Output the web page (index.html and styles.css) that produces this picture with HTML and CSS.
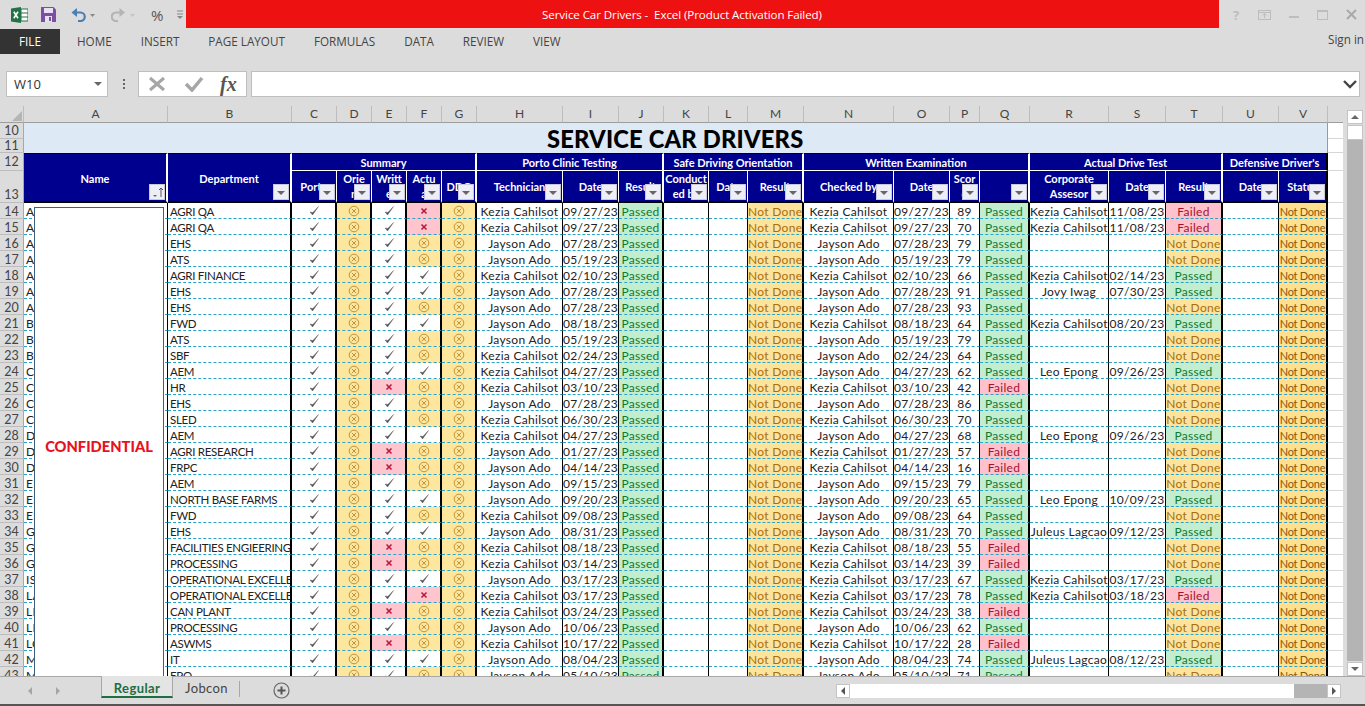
FILE: index.html
```html
<!DOCTYPE html>
<html lang="en">
<head>
<meta charset="UTF-8" />
<title>Service Car Drivers - Excel (Product Activation Failed)</title>
<link rel="stylesheet" href="styles.css">
</head>
<body>

<svg class="defs" width="0" height="0">
  <symbol id="ok" viewBox="0 0 12 12"><path d="M2 7 L4.600 10 L10.500 1.500 L4.800 7.600 Z" fill="#555" stroke="#555" stroke-width=".4"/></symbol>
  <symbol id="no" viewBox="0 0 12 12"><circle cx="6" cy="6" r="4.800" fill="none" stroke="#c5923a" stroke-width="1"/><path d="M3.800 3.800 L8.200 8.200 M8.200 3.800 L3.800 8.200" stroke="#c5923a" stroke-width="1"/></symbol>
  <symbol id="bad" viewBox="0 0 12 12"><path d="M3.500 3.500 L8.500 8.500 M8.500 3.500 L3.500 8.500" stroke="#b3173a" stroke-width="1.500"/></symbol>
</svg>

<div class="titlebar">
  <div class="qat">
    <svg class="ic-xl" width="17" height="16" viewBox="0 0 17 16"><rect x="6" y="2" width="11" height="12" fill="#fff" stroke="#217346"/><path d="M10 2v12M6 6h11M6 10h11" stroke="#217346"/><path d="M0 1.500 L10 0 V16 L0 14.500 Z" fill="#217346"/><path d="M2.800 4.800 L7 11.200 M7 4.800 L2.800 11.200" stroke="#fff" stroke-width="1.600"/></svg>
    <svg class="ic-save" width="15" height="15" viewBox="0 0 15 15"><path d="M0 0H12.500L15 2.500V15H0Z" fill="#7b4fa3"/><rect x="3" y="1" width="9" height="5" fill="#e9e0f2"/><rect x="4" y="9" width="7" height="6" fill="#e9e0f2"/><rect x="8" y="10" width="2" height="4" fill="#7b4fa3"/></svg>
    <svg class="ic-undo" width="24" height="15" viewBox="0 0 24 15"><path d="M4 5.500 H9.500 A4.200 4.200 0 0 1 9.500 14 H7" fill="none" stroke="#4a7fb5" stroke-width="2.200"/><path d="M0.500 5.500 L6 1 V10 Z" fill="#4a7fb5"/><path d="M19 7 H24 L21.500 10 Z" fill="#888"/></svg>
    <svg class="ic-redo" width="24" height="15" viewBox="0 0 24 15"><path d="M10 5.500 H5 A4.200 4.200 0 0 0 5 14 H7" fill="none" stroke="#b4b4b4" stroke-width="2.200"/><path d="M14 5.500 L8.500 1 V10 Z" fill="#b4b4b4"/><path d="M19 7 H24 L21.500 10 Z" fill="#c4c4c4"/></svg>
    <span class="qat-pct">%</span>
    <svg class="ic-more" width="6" height="9" viewBox="0 0 6 9"><path d="M0 1H6M0 4H6" stroke="#888"/><path d="M0 6H6L3 9Z" fill="#888"/></svg>
  </div>
  <div class="title">Service Car Drivers -&nbsp; Excel (Product Activation Failed)</div>
  <div class="winbtns">
    <span class="wb-help">?</span>
    <svg width="13" height="10" viewBox="0 0 13 10"><rect x=".5" y=".5" width="12" height="9" fill="none" stroke="#bdbdbd"/><path d="M.5 2.500H12.500" stroke="#bdbdbd"/><path d="M6.500 8V4M4.500 5.500L6.500 3.500L8.500 5.500" fill="none" stroke="#bdbdbd"/></svg>
    <svg width="10" height="10" viewBox="0 0 10 10"><path d="M0 7H10" stroke="#bdbdbd" stroke-width="2"/></svg>
    <svg width="11" height="10" viewBox="0 0 11 10"><rect x=".5" y=".5" width="10" height="9" fill="none" stroke="#bdbdbd"/><path d="M.5 1.500H10.500" stroke="#bdbdbd"/></svg>
    <svg width="11" height="11" viewBox="0 0 11 11"><path d="M1 1L10 10M10 1L1 10" stroke="#a9a9a9" stroke-width="2"/></svg>
  </div>
</div>

<div class="ribbon">
  <span class="tab-file">FILE</span>
  <nav class="ribbon-tabs">
    <span>HOME</span><span>INSERT</span><span>PAGE LAYOUT</span><span>FORMULAS</span><span>DATA</span><span>REVIEW</span><span>VIEW</span>
  </nav>
  <span class="signin">Sign in</span>
</div>

<div class="formula-row">
  <div class="namebox"><span>W10</span><i class="tri"></i></div>
  <div class="dots"></div>
  <div class="fx-box">
    <svg width="18" height="16" viewBox="0 0 18 16"><path d="M2 2L16 14M16 2L2 14" stroke="#a6a6a6" stroke-width="3"/></svg>
    <svg width="20" height="16" viewBox="0 0 20 16"><path d="M2 8L8 14L18 2" fill="none" stroke="#a6a6a6" stroke-width="3.500"/></svg>
    <span class="fx">fx</span>
  </div>
  <div class="formula-input">
    <svg width="14" height="9" viewBox="0 0 14 9"><path d="M1 1L7 7L13 1" fill="none" stroke="#444" stroke-width="2.400"/></svg>
  </div>
</div>

<div class="sheet">
  <div class="viewport">
    <table class="grid">
      <colgroup>
        <col class="c-rh"><col class="c-a"><col class="c-b"><col class="c-c"><col class="c-d"><col class="c-d"><col class="c-d"><col class="c-d">
        <col class="c-h"><col class="c-i"><col class="c-j"><col class="c-k"><col class="c-l"><col class="c-i"><col class="c-n"><col class="c-i">
        <col class="c-p"><col class="c-q"><col class="c-r"><col class="c-s"><col class="c-s"><col class="c-i"><col class="c-v"><col class="c-w">
      </colgroup>
      <thead>
        <tr class="heads">
          <th class="corner"><i></i></th>
          <th>A</th><th>B</th><th>C</th><th>D</th><th>E</th><th>F</th><th>G</th><th>H</th><th>I</th><th>J</th><th>K</th><th>L</th><th>M</th><th>N</th><th>O</th><th>P</th><th>Q</th><th>R</th><th>S</th><th>T</th><th>U</th><th>V</th><th class="blank"></th>
        </tr>
      </thead>
      <tbody>
        <tr class="r10">
          <td class="rh">10</td>
          <td class="banner" colspan="7" rowspan="2"></td>
          <td class="banner banner-title" colspan="15" rowspan="2">SERVICE CAR DRIVERS</td>
          <td class="wc"></td>
        </tr>
        <tr class="r11"><td class="rh">11</td><td class="wc"></td></tr>
        <tr class="r12">
          <td class="rh">12</td>
          <th class="hd sep2 hd-top" rowspan="2">Name<span class="fb fb-sort"><svg width="13" height="11" viewBox="0 0 13 11"><path d="M2 8H6L4 10Z" fill="#666"/><path d="M10 10V1M8 3L10 1L12 3" fill="none" stroke="#555"/></svg></span></th>
          <th class="hd sep2 hd-top" rowspan="2">Department<span class="fb"></span></th>
          <th class="hd sep2 grp" colspan="5">Summary</th>
          <th class="hd sep2 grp" colspan="3">Porto Clinic Testing</th>
          <th class="hd sep2 grp" colspan="3">Safe Driving Orientation</th>
          <th class="hd sep2 grp" colspan="4">Written Examination</th>
          <th class="hd sep2 grp" colspan="3">Actual Drive Test</th>
          <th class="hd endh grp" colspan="2">Defensive Driver's</th>
          <td class="wc"></td>
        </tr>
        <tr class="r13">
          <td class="rh rh-low">13</td>
          <th class="hd sub sep1">Porto<span class="fb"></span></th>
          <th class="hd sub sep1 wrap">Orie<br>n<span class="fb"></span></th>
          <th class="hd sub sep1 wrap">Writt<br>e<span class="fb"></span></th>
          <th class="hd sub sep1 wrap">Actu<br>a<span class="fb"></span></th>
          <th class="hd sub sep2">DDC<span class="fb"></span></th>
          <th class="hd sub sep1">Technician<span class="fb"></span></th>
          <th class="hd sub sep1">Date<span class="fb"></span></th>
          <th class="hd sub sep2">Result<span class="fb"></span></th>
          <th class="hd sub sep1 wrap">Conduct<br>ed by<span class="fb"></span></th>
          <th class="hd sub sep1">Date<span class="fb"></span></th>
          <th class="hd sub sep2">Result<span class="fb"></span></th>
          <th class="hd sub sep1">Checked by<span class="fb"></span></th>
          <th class="hd sub sep1">Date<span class="fb"></span></th>
          <th class="hd sub sep1 wrap">Scor<br>e<span class="fb"></span></th>
          <th class="hd sub sep2"><span class="fb"></span></th>
          <th class="hd sub sep1 wrap">Corporate<br>Assesor<span class="fb"></span></th>
          <th class="hd sub sep1">Date<span class="fb"></span></th>
          <th class="hd sub sep2">Result<span class="fb"></span></th>
          <th class="hd sub sep1">Date<span class="fb"></span></th>
          <th class="hd sub endh">Status<span class="fb"></span></th>
          <td class="wc"></td>
        </tr>
      </tbody>
      <tbody id="rows"></tbody>
    </table>
    <div class="confidential">CONFIDENTIAL</div>
  </div>
  <div class="vscroll">
    <div class="sb-btn"><i class="tri tri-up"></i></div>
    <div class="sb-thumb"></div>
    <div class="sb-track"></div>
    <div class="sb-btn"><i class="tri"></i></div>
  </div>
</div>

<div class="tabstrip">
  <div class="tab-nav">
    <i class="nav-l"></i><i class="nav-r"></i>
  </div>
  <div class="tab-active">Regular</div>
  <div class="tab-other">Jobcon</div>
  <svg class="tab-add" width="17" height="17" viewBox="0 0 17 17"><circle cx="8.500" cy="8.500" r="7.500" fill="none" stroke="#666" stroke-width="1.200"/><path d="M8.500 4.500V12.500M4.500 8.500H12.500" stroke="#555" stroke-width="2"/></svg>
  <div class="hscroll">
    <div class="sb-btn"><i class="nav-l dark"></i></div>
    <div class="hs-thumb"></div>
    <div class="hs-track"></div>
    <div class="sb-btn"><i class="nav-r dark"></i></div>
  </div>
</div>

<script src="sheet.js"></script>
</body>
</html>
```

FILE: styles.css
```css
body {
  margin: 0;
  width: 1365px;
  height: 706px;
  overflow: hidden;
  background: #dcdcdc;
  font-family: "Lato", "Liberation Sans", sans-serif;
  color: #333;
}
.defs { position: absolute; }

/* title bar */
.titlebar {
  display: flex;
  height: 29px;
}
.qat {
  width: 186px;
  flex: none;
  display: flex;
  align-items: center;
  padding-left: 11px;
  box-sizing: border-box;
}
.ic-save { margin-left: 13px; }
.ic-undo { margin-left: 15px; }
.ic-redo { margin-left: 16px; }
.qat-pct {
  margin-left: 16px;
  font: 15px "Open Sans", sans-serif;
  color: #555;
}
.ic-more { margin-left: 14px; }
.title {
  flex: 1;
  height: 28px;
  padding-right: 41px;
  background: #ee1111;
  color: #fff;
  font: 11.600px/30px "Open Sans", sans-serif;
  text-align: center;
  letter-spacing: -.1px;
}
.winbtns {
  width: 146px;
  display: flex;
  align-items: center;
  gap: 18px;
  padding-left: 14px;
  box-sizing: border-box;
}
.wb-help { font: bold 13px "Open Sans", sans-serif; color: #bdbdbd; margin-right: 1px; }

/* ribbon tabs */
.ribbon {
  display: flex;
  height: 25px;
  font: 11.700px/25px "Open Sans", sans-serif;
  color: #444;
}
.tab-file {
  width: 60px;
  background: #333;
  color: #fff;
  text-align: center;
}
.ribbon-tabs {
  display: flex;
  gap: 29px;
  padding-left: 17px;
}
.signin {
  margin-left: auto;
  margin-top: -2px;
  margin-right: 1px;
}

/* formula bar */
.formula-row {
  display: flex;
  height: 26px;
  margin-top: 17px;
  padding-left: 6px;
}
.namebox {
  width: 102px;
  box-sizing: border-box;
  background: #fff;
  border: 1px solid #bfbfbf;
  display: flex;
  align-items: center;
  justify-content: space-between;
  padding: 0 5px 0 7px;
  font: 13px "Open Sans", sans-serif;
}
.tri {
  display: block;
  width: 0;
  height: 0;
  border-left: 4px solid transparent;
  border-right: 4px solid transparent;
  border-top: 4px solid #666;
}
.tri-up {
  border-top: 0;
  border-bottom: 4px solid #666;
}
.dots {
  width: 30px;
  position: relative;
}
.dots::before {
  content: "";
  position: absolute;
  left: 15px;
  top: 8px;
  width: 2px;
  height: 2px;
  background: #666;
  box-shadow: 0 4px 0 #666, 0 8px 0 #666;
}
.fx-box {
  width: 109px;
  box-sizing: border-box;
  background: #fff;
  border: 1px solid #bfbfbf;
  display: flex;
  align-items: center;
  gap: 18px;
  padding-left: 9px;
}
.fx {
  font: italic bold 20px "Liberation Serif", serif;
  color: #555;
  margin-left: -2px;
}
.formula-input {
  width: 1109px;
  box-sizing: border-box;
  margin-left: 4px;
  background: #fff;
  border: 1px solid #bfbfbf;
  display: flex;
  align-items: center;
  justify-content: flex-end;
  padding-right: 2px;
}

/* sheet */
.sheet {
  display: flex;
  height: 571px;
  margin-top: 9px;
  border-bottom: 1px solid #a8a8a8;
  box-sizing: border-box;
}
.viewport {
  width: 1343px;
  height: 570px;
  overflow: hidden;
  position: relative;
  background: #fff;
}
.grid {
  width: 1343px;
  table-layout: fixed;
  border-collapse: separate;
  border-spacing: 0;
  font-size: 12px;
  letter-spacing: .3px;
  color: #222;
}
.c-rh { width: 24px; } .c-a { width: 144px; } .c-b { width: 124px; } .c-c { width: 45px; }
.c-d { width: 35px; } .c-h { width: 86px; } .c-i { width: 56px; } .c-j { width: 45px; }
.c-k { width: 45px; } .c-l { width: 39px; } .c-n { width: 90px; } .c-p { width: 30px; }
.c-q { width: 50px; } .c-r { width: 79px; } .c-s { width: 57px; } .c-v { width: 49px; }
.c-w { width: 15px; }

.grid td, .grid th {
  padding: 0;
  box-sizing: border-box;
  overflow: hidden;
  white-space: nowrap;
}
.heads th {
  height: 17px;
  background: #dcdcdc;
  border-right: 1px solid #bdbdbd;
  border-bottom: 1px solid #9d9d9d;
  font-weight: normal;
  font-size: 12px;
  line-height: 14px;
  letter-spacing: 0;
  color: #444;
}
.heads .blank { border-right: 0; }
.corner { position: relative; }
.corner i {
  position: absolute;
  right: 1px;
  bottom: 1px;
  width: 0;
  height: 0;
  border-left: 10px solid transparent;
  border-bottom: 10px solid #b5b5b5;
}
.grid .rh {
  padding-top: 1px;
  background: #dcdcdc;
  border-right: 1px solid #a8a8a8;
  border-bottom: 1px solid #bdbdbd;
  text-align: center;
  font-size: 12.500px;
  line-height: 12px;
  letter-spacing: 0;
  color: #444;
}
.grid .rh-low { vertical-align: bottom; padding-bottom: 1px; }
.r10 { height: 16px; }
.r11 { height: 14px; }
.r12 { height: 18px; }
.r13 { height: 32px; }

.banner {
  background: #dde9f5;
}
.banner:first-of-type { border-right: 1px solid #555; }
.grid .banner-title {
  padding: 2px 0 0 70px;
  font-size: 23.700px;
  line-height: 24px;
  font-weight: 900;
  letter-spacing: .2px;
  color: #000;
  border-right: 1px solid #999;
}
.grid td.wc {
  border-bottom: 1px solid #d6d6d6;
}

.hd {
  background: #00008e;
  color: #fff;
  font-size: 11px;
  line-height: 15px;
  font-weight: bold;
  letter-spacing: 0;
  text-align: center;
  position: relative;
}
.grid .hd-top { padding-top: 1px; border-top: 1px solid #000; border-bottom: 2px solid #000; }
.grp { border-top: 1px solid #000; border-bottom: 1px solid #fff; }
.sub { border-bottom: 2px solid #000; }
.sep1 { border-right: 1px solid #fff; }
.sep2 { border-right: 2px solid #fff; }
.endh { border-right: 2px solid #000; }
.fb {
  position: absolute;
  right: 1px;
  bottom: 1px;
  width: 16px;
  height: 16px;
  background: #eeeef6;
  border: 1px solid #c8c8d8;
  box-sizing: border-box;
}
.fb::after {
  content: "";
  position: absolute;
  left: 3px;
  top: 6px;
  border-left: 4px solid transparent;
  border-right: 4px solid transparent;
  border-top: 4px solid #666;
}
.fb-sort::after { display: none; }
.fb-sort svg { display: block; margin: 2px 0 0 1px; }

/* data rows */
.row { height: 16px; }
.row td {
  padding-top: 2px;
  line-height: 13px;
  border-bottom: 1px dashed #2aa3c6;
  text-align: center;
  background: #fff;
}
.row td.rh {
  padding-top: 2px;
  line-height: 13px;
  border-bottom: 1px solid #bdbdbd;
  background: #dcdcdc;
}
.row td.wc { border-bottom: 1px solid #d6d6d6; }
.row .left { text-align: left; padding-left: 2px; }
.row .dept {
  font-size: 11.500px;
  letter-spacing: -.3px;
}
.e1 { border-right: 1px solid #000; }
.e2 { border-right: 2px solid #000; }
.row td.yes { background: #fff; padding-top: 0; }
.row td.warn { background: #fde79e; padding-top: 0; }
.row td.fail { background: #ffc5ce; padding-top: 0; }
.row td svg { display: block; width: 12px; height: 12px; margin: 1px auto 0; }
.row td.yes svg { margin-top: 0; }

.row td.p { background: #c3edcf; color: #0e7a30; }
.row td.f { background: #ffc2cc; color: #a51230; }
.row td.n { background: #fde49a; color: #a86e12; }
.row td.small {
  font-size: 11px;
  letter-spacing: -.25px;
  background: #ffe08f;
  color: #85570f;
}

.confidential {
  position: absolute;
  left: 34px;
  top: 101px;
  width: 130px;
  height: 478px;
  box-sizing: border-box;
  background: #fff;
  border: 1px solid #3f5f7f;
  display: flex;
  align-items: center;
  justify-content: center;
  color: #e81123;
  font-size: 14.700px;
  font-weight: 900;
}

/* vertical scrollbar */
.vscroll {
  width: 22px;
  display: flex;
  flex-direction: column;
  padding: 4px 2px 0 4px;
  box-sizing: border-box;
  gap: 1px;
}
.sb-btn {
  width: 16px;
  height: 14px;
  box-sizing: border-box;
  background: #fff;
  border: 1px solid #c4c4c4;
  display: flex;
  align-items: center;
  justify-content: center;
  flex: none;
}
.sb-thumb {
  width: 16px;
  height: 15px;
  box-sizing: border-box;
  background: #fff;
  border: 1px solid #c4c4c4;
  flex: none;
}
.sb-track {
  flex: 1;
  width: 16px;
  background: #b4b4b4;
  margin-top: -1px;
}

/* sheet tabs */
.tabstrip {
  display: flex;
  height: 29px;
  box-sizing: border-box;
  border-bottom: 2px solid #555;
  position: relative;
  font-size: 13px;
  letter-spacing: .4px;
}
.tab-nav {
  width: 101px;
  display: flex;
  gap: 24px;
  padding: 10px 0 0 28px;
  box-sizing: border-box;
}
.nav-l, .nav-r {
  display: block;
  width: 0;
  height: 0;
  border-top: 4px solid transparent;
  border-bottom: 4px solid transparent;
}
.nav-l { border-right: 4px solid #a6a6a6; }
.nav-r { border-left: 4px solid #a6a6a6; }
.nav-l.dark { border-right-color: #555; }
.nav-r.dark { border-left-color: #555; }
.tab-active {
  width: 72px;
  height: 22px;
  box-sizing: border-box;
  margin-top: -1px;
  background: #e4e4e4;
  border-left: 1px solid #a8a8a8;
  border-right: 1px solid #a8a8a8;
  border-bottom: 2px solid #1e6e42;
  color: #1e6e42;
  font-weight: bold;
  text-align: center;
  line-height: 25px;
}
.tab-other {
  width: 67px;
  height: 16px;
  margin-top: 4px;
  box-sizing: border-box;
  border-right: 1px solid #a8a8a8;
  padding-left: 12px;
  line-height: 15px;
  color: #444;
}
.tab-add {
  margin: 5px 0 0 33px;
}
.hscroll {
  position: absolute;
  left: 836px;
  top: 7px;
  display: flex;
  height: 14px;
  width: 505px;
}
.hs-thumb { flex: 1; background: #fff; }
.hs-track { width: 33px; background: #b4b4b4; }
.hscroll .sb-btn { width: 14px; }
```

FILE: sheet.js
```js
// rows 14-43: name, dept, E, F, tech, date, checker, date, score, written, assessor, date, drive
const K = 'Kezia Cahilsot', J = 'Jayson Ado', L = 'Leo Epong', G = 'Juleus Lagcao', W = 'Jovy Iwag';
const data = [
  ['AB', 'AGRI QA', 'v', 'x', K, '09/27/23', K, '09/27/23', 89, 'p', K, '11/08/23', 'f'],
  ['AB', 'AGRI QA', 'v', 'x', K, '09/27/23', K, '09/27/23', 70, 'p', K, '11/08/23', 'f'],
  ['AC', 'EHS', 'v', 'o', J, '07/28/23', J, '07/28/23', 79, 'p'],
  ['AG', 'ATS', 'v', 'o', J, '05/19/23', J, '05/19/23', 79, 'p'],
  ['AL', 'AGRI FINANCE', 'v', 'v', K, '02/10/23', K, '02/10/23', 66, 'p', K, '02/14/23', 'p'],
  ['AL', 'EHS', 'v', 'v', J, '07/28/23', J, '07/28/23', 91, 'p', W, '07/30/23', 'p'],
  ['AN', 'EHS', 'v', 'o', J, '07/28/23', J, '07/28/23', 93, 'p'],
  ['BA', 'FWD', 'v', 'v', J, '08/18/23', K, '08/18/23', 64, 'p', K, '08/20/23', 'p'],
  ['BA', 'ATS', 'v', 'o', J, '05/19/23', J, '05/19/23', 79, 'p'],
  ['BA', 'SBF', 'v', 'o', K, '02/24/23', J, '02/24/23', 64, 'p'],
  ['CA', 'AEM', 'v', 'v', K, '04/27/23', J, '04/27/23', 62, 'p', L, '09/26/23', 'p'],
  ['CA', 'HR', 'x', 'o', K, '03/10/23', K, '03/10/23', 42, 'f'],
  ['CA', 'EHS', 'v', 'o', J, '07/28/23', J, '07/28/23', 86, 'p'],
  ['CA', 'SLED', 'v', 'o', K, '06/30/23', K, '06/30/23', 70, 'p'],
  ['DA', 'AEM', 'v', 'v', K, '04/27/23', J, '04/27/23', 68, 'p', L, '09/26/23', 'p'],
  ['DE', 'AGRI RESEARCH', 'x', 'o', J, '01/27/23', K, '01/27/23', 57, 'f'],
  ['DI', 'FRPC', 'x', 'o', J, '04/14/23', K, '04/14/23', 16, 'f'],
  ['EL', 'AEM', 'v', 'o', J, '09/15/23', J, '09/15/23', 79, 'p'],
  ['ES', 'NORTH BASE FARMS', 'v', 'v', J, '09/20/23', J, '09/20/23', 65, 'p', L, '10/09/23', 'p'],
  ['ES', 'FWD', 'v', 'o', K, '09/08/23', J, '09/08/23', 64, 'p'],
  ['GA', 'EHS', 'v', 'v', J, '08/31/23', J, '08/31/23', 70, 'p', G, '09/12/23', 'p'],
  ['GE', 'FACILITIES ENGIEERING', 'x', 'o', K, '08/18/23', K, '08/18/23', 55, 'f'],
  ['GO', 'PROCESSING', 'x', 'o', K, '03/14/23', K, '03/14/23', 39, 'f'],
  ['IS', 'OPERATIONAL EXCELLENCE', 'v', 'v', J, '03/17/23', K, '03/17/23', 67, 'p', K, '03/17/23', 'p'],
  ['LA', 'OPERATIONAL EXCELLENCE', 'v', 'x', K, '03/17/23', K, '03/17/23', 78, 'p', K, '03/18/23', 'f'],
  ['LI', 'CAN PLANT', 'x', 'o', K, '03/24/23', K, '03/24/23', 38, 'f'],
  ['LI', 'PROCESSING', 'v', 'o', J, '10/06/23', J, '10/06/23', 62, 'p'],
  ['LO', 'ASWMS', 'x', 'o', K, '10/17/22', K, '10/17/22', 28, 'f'],
  ['MA', 'IT', 'v', 'v', J, '08/04/23', J, '08/04/23', 74, 'p', G, '08/12/23', 'p'],
  ['MA', 'EPO', 'v', 'o', J, '05/10/23', J, '05/10/23', 71, 'p']
];

const words = { p: 'Passed', f: 'Failed', n: 'Not Done' };

function mark(kind, edge) {
  const map = { v: ['yes', 'ok'], o: ['warn', 'no'], x: ['fail', 'bad'] };
  const [cls, icon] = map[kind];
  return `<td class="${cls} ${edge}"><svg><use href="#${icon}"/></svg></td>`;
}

function result(kind, edge) {
  return `<td class="${kind} ${edge}">${words[kind]}</td>`;
}

document.getElementById('rows').innerHTML = data.map((r, i) => {
  const [name, dept, e, f, tech, d1, chk, d2, score, written, who, d3, drive] = r;
  return `<tr class="row">
    <td class="rh">${i + 14}</td>
    <td class="left e1">${name}</td>
    <td class="left dept e2">${dept}</td>
    ${mark('v', 'e2')}${mark('o', 'e2')}${mark(e, 'e2')}${mark(f, 'e2')}${mark('o', 'e2')}
    <td class="e1">${tech}</td><td class="e1">${d1}</td>${result('p', 'e2')}
    <td class="e1"></td><td class="e1"></td>${result('n', 'e2')}
    <td class="e1">${chk}</td><td class="e1">${d2}</td><td class="e1">${score}</td>${result(written, 'e2')}
    <td class="e1">${who || ''}</td><td class="e1">${d3 || ''}</td>${result(drive || 'n', 'e2')}
    <td class="e1"></td><td class="n small e2">Not Done</td>
    <td class="wc"></td>
  </tr>`;
}).join('');
```
